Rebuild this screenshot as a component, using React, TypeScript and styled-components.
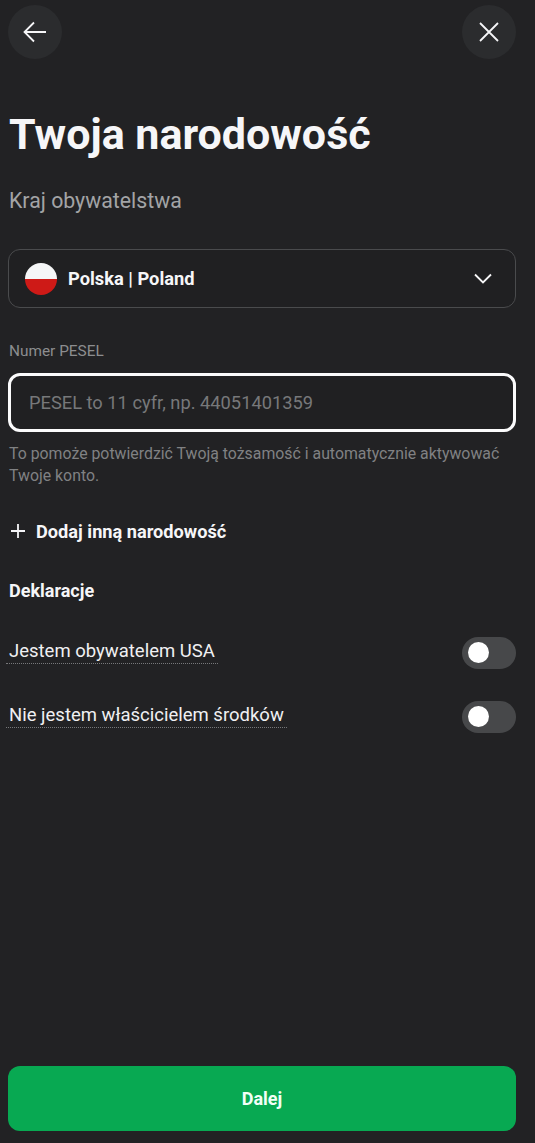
import React from 'react';
import styled, { createGlobalStyle } from 'styled-components';

const GlobalStyle = createGlobalStyle`
  html, body {
    margin: 0;
    padding: 0;
    background: #222224;
  }
  * {
    box-sizing: border-box;
  }
`;

const Page = styled.div`
  width: 535px;
  height: 1143px;
  padding: 5px 19px 12px 8px;
  background: #222224;
  color: #f6f6f8;
  font-family: Roboto, "Liberation Sans", sans-serif;
  display: flex;
  flex-direction: column;
`;

const Header = styled.div`
  display: flex;
  justify-content: space-between;
  height: 54px;
`;

const RoundButton = styled.button`
  width: 54px;
  height: 54px;
  border: 0;
  padding: 0;
  border-radius: 50%;
  background: #2b2c2e;
  color: #f6f6f8;
  display: flex;
  align-items: center;
  justify-content: center;
`;

const Title = styled.h1`
  margin: 45px 0 0 1px;
  font-size: 43px;
  line-height: 60px;
  font-weight: 700;
`;

const Subtitle = styled.p`
  margin: 23px 0 0 1px;
  font-size: 21.3px;
  line-height: 28px;
  color: #a3a4a6;
`;

const Select = styled.div`
  margin-top: 34px;
  height: 59px;
  padding: 0 23px 0 16px;
  border: 1.5px solid #4a4b4d;
  border-radius: 12px;
  background: #202022;
  display: flex;
  align-items: center;
  gap: 11px;
`;

const Flag = styled.svg`
  width: 32px;
  height: 32px;
  flex: none;
`;

const SelectText = styled.span`
  flex: 1;
  font-size: 18.3px;
  font-weight: 700;
`;

const FieldLabel = styled.label`
  display: block;
  margin: 33px 0 0 1px;
  font-size: 15.4px;
  line-height: 20px;
  color: #8c8d8f;
`;

const Input = styled.input`
  display: block;
  width: 100%;
  height: 59px;
  margin-top: 12px;
  padding: 0 18px;
  border: 3px solid #fbfbfc;
  border-radius: 12px;
  background: #202022;
  color: #f6f6f8;
  font-family: inherit;
  font-size: 18.3px;
  outline: none;

  &::placeholder {
    color: #77787a;
    opacity: 1;
  }
`;

const Helper = styled.p`
  margin: 11px 0 0 1px;
  font-size: 15.85px;
  line-height: 22px;
  color: #808183;
`;

const AddRow = styled.div`
  margin-top: 32px;
  height: 24px;
  padding-left: 3px;
  display: flex;
  align-items: center;
  gap: 11px;
  font-size: 18.2px;
  font-weight: 700;
`;

const SectionTitle = styled.h2`
  margin: 36px 0 0 1px;
  font-size: 18px;
  line-height: 24px;
  font-weight: 700;
`;

const Declarations = styled.div`
  margin-top: 34px;
  display: flex;
  flex-direction: column;
  gap: 32px;
`;

const DeclarationRow = styled.div`
  height: 32px;
  display: flex;
  align-items: center;
  justify-content: space-between;
`;

const DottedLabel = styled.span`
  margin: 0 0 4px -2px;
  padding: 0 3px;
  font-size: 18.5px;
  line-height: 24px;
  color: #f0f0f2;
  border-bottom: 1px dotted #77787a;
`;

const Toggle = styled.div`
  width: 54px;
  height: 32px;
  padding: 5px 6px;
  border-radius: 16px;
  background: #47484a;
  display: flex;
`;

const Knob = styled.div`
  width: 21px;
  height: 21px;
  border-radius: 50%;
  background: #ffffff;
`;

const Footer = styled.div`
  margin-top: auto;
`;

const PrimaryButton = styled.button`
  width: 100%;
  height: 65px;
  border: 0;
  border-radius: 12px;
  background: #08a952;
  color: #f2fff7;
  font-family: inherit;
  font-size: 18px;
  font-weight: 700;
`;

const declarations = ['Jestem obywatelem USA', 'Nie jestem właścicielem środków'];

const App: React.FC = () => (
  <Page>
    <GlobalStyle />
    <Header>
      <RoundButton aria-label="Wstecz">
        <svg width="26" height="26" viewBox="0 0 26 26" fill="none" stroke="currentColor" strokeWidth="1.8">
          <path d="M24 13H3M12 3.5L2.5 13l9.5 9.5" />
        </svg>
      </RoundButton>
      <RoundButton aria-label="Zamknij">
        <svg width="24" height="24" viewBox="0 0 24 24" fill="none" stroke="currentColor" strokeWidth="1.8">
          <path d="M3 3l18 18M21 3L3 21" />
        </svg>
      </RoundButton>
    </Header>
    <Title>Twoja narodowość</Title>
    <Subtitle>Kraj obywatelstwa</Subtitle>
    <Select>
      <Flag viewBox="0 0 32 32">
        <path d="M0 16a16 16 0 0 1 32 0z" fill="#f5f6f7" />
        <path d="M0 16a16 16 0 0 0 32 0z" fill="#ce1a17" />
      </Flag>
      <SelectText>Polska | Poland</SelectText>
      <svg width="18" height="11" viewBox="0 0 18 11" fill="none" stroke="#f6f6f8" strokeWidth="1.8">
        <path d="M1 1.5l8 8 8-8" />
      </svg>
    </Select>
    <FieldLabel>Numer PESEL</FieldLabel>
    <Input placeholder="PESEL to 11 cyfr, np. 44051401359" readOnly />
    <Helper>To pomoże potwierdzić Twoją tożsamość i automatycznie aktywować Twoje konto.</Helper>
    <AddRow>
      <svg width="14" height="14" viewBox="0 0 14 14" fill="none" stroke="currentColor" strokeWidth="1.8">
        <path d="M7 0v14M0 7h14" />
      </svg>
      Dodaj inną narodowość
    </AddRow>
    <SectionTitle>Deklaracje</SectionTitle>
    <Declarations>
      {declarations.map((text) => (
        <DeclarationRow key={text}>
          <DottedLabel>{text}</DottedLabel>
          <Toggle>
            <Knob />
          </Toggle>
        </DeclarationRow>
      ))}
    </Declarations>
    <Footer>
      <PrimaryButton>Dalej</PrimaryButton>
    </Footer>
  </Page>
);

export default App;
